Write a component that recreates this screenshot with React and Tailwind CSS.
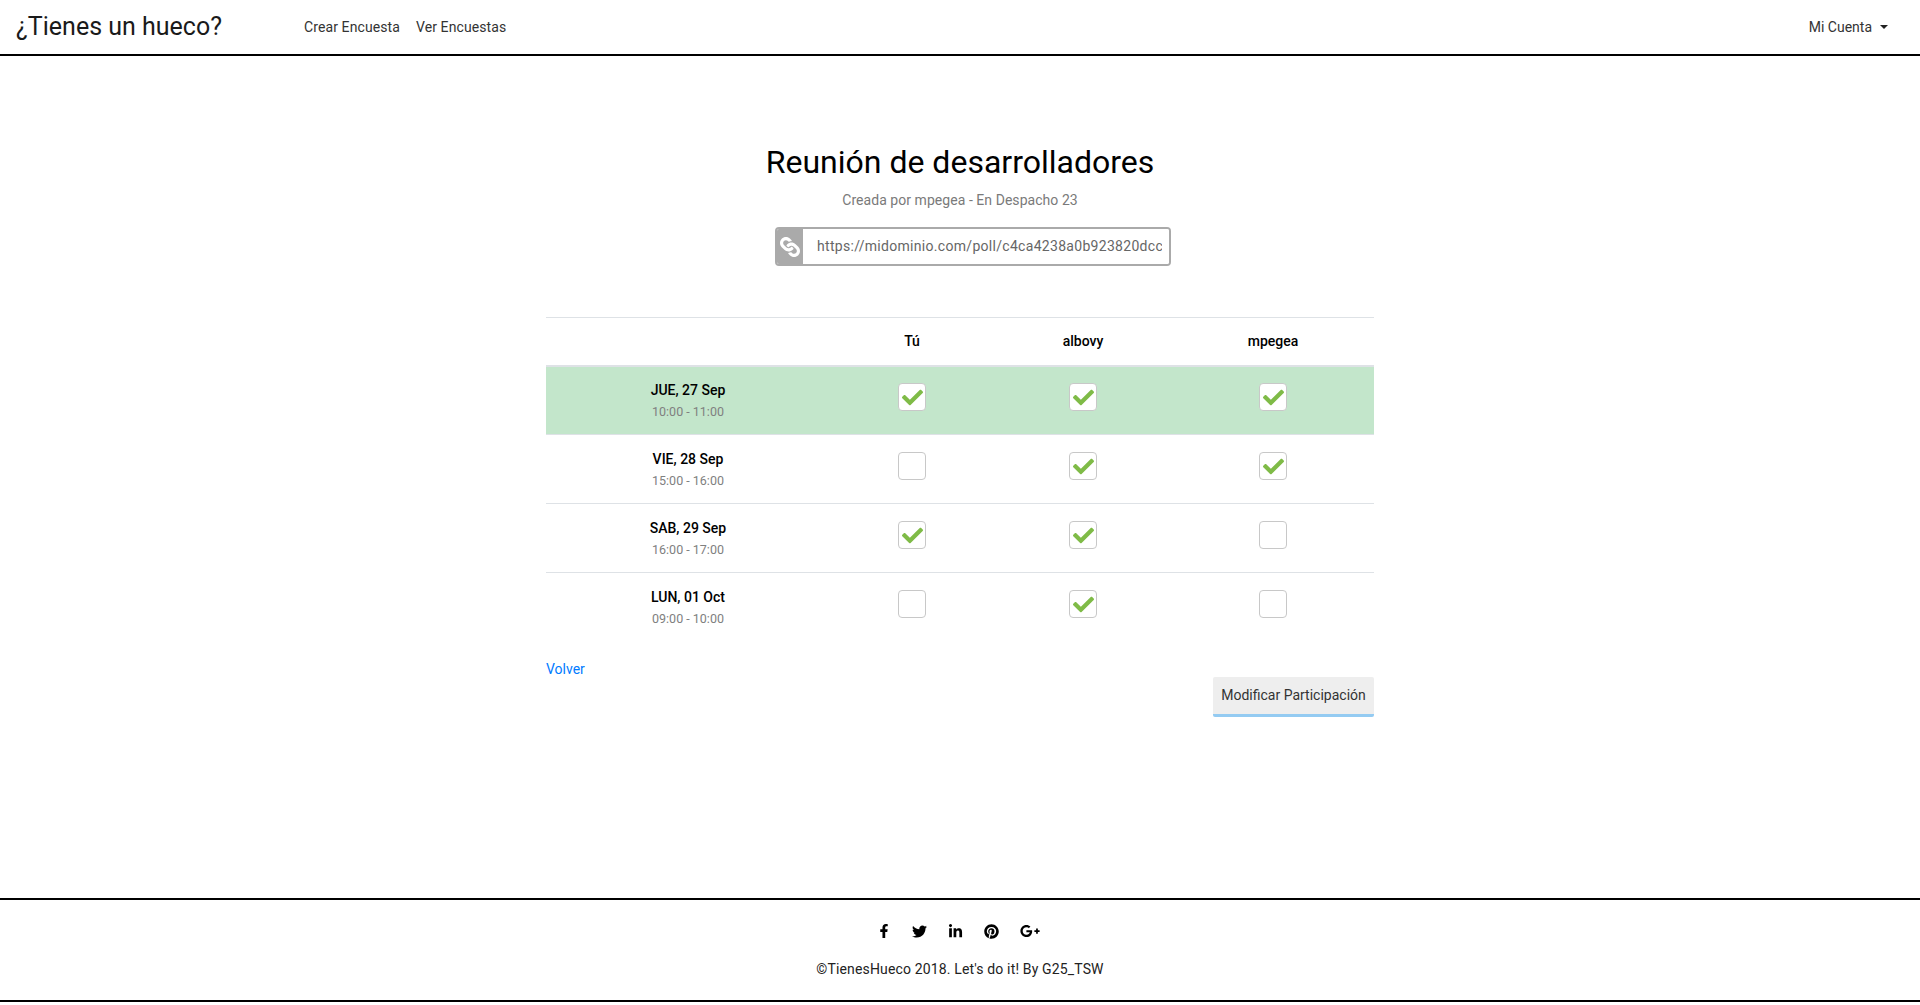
import { FaCheck, FaLink, FaFacebookF, FaTwitter, FaLinkedinIn, FaPinterest, FaGooglePlusG } from "react-icons/fa";

const rows = [
  { day: "JUE, 27 Sep", time: "10:00 - 11:00", checks: [true, true, true], best: true },
  { day: "VIE, 28 Sep", time: "15:00 - 16:00", checks: [false, true, true] },
  { day: "SAB, 29 Sep", time: "16:00 - 17:00", checks: [true, true, false] },
  { day: "LUN, 01 Oct", time: "09:00 - 10:00", checks: [false, true, false] },
];

const Check = ({ on }) => (
  <span className="mx-auto flex h-[28px] w-[28px] -translate-y-[3px] items-center justify-center rounded-[4px] border border-[#c8c8c8] bg-white">
    {on && <FaCheck className="h-[21px] w-[21px] text-[#7fbb47]" />}
  </span>
);

const App = () => {
  return (
    <div className="flex min-h-[1005px] flex-col bg-white font-['Roboto',sans-serif] text-[#212529]">
      <nav className="flex h-[56px] items-center justify-between border-b-2 border-black pl-[16px] pr-[32px]">
        <div className="flex items-center">
          <a className="w-[288px] text-[25px] leading-[56px] text-[#1a1a1a]">¿Tienes un hueco?</a>
          <a className="mr-[16px] text-[14px] tracking-[0.1px] text-[#333]">Crear Encuesta</a>
          <a className="text-[14px] tracking-[0.1px] text-[#333]">Ver Encuestas</a>
        </div>
        <div className="flex items-center gap-[8px] text-[14px] text-[#333]">
          Mi Cuenta
          <span className="h-0 w-0 border-x-[4px] border-t-[4px] border-x-transparent border-t-[#222]" />
        </div>
      </nav>

      <main className="flex h-[842px] flex-col items-center pt-[82px]">
        <h1 className="text-[32px] leading-[48px] text-black">Reunión de desarrolladores</h1>
        <p className="mt-[2px] text-[14px] leading-[24px] tracking-[0.05px] text-[#7a7a7a]">Creada por mpegea - En Despacho 23</p>
        <div className="ml-[26px] mt-[15px] flex h-[39px] w-[396px] overflow-hidden rounded-[4px] border-2 border-[#aaa]">
          <span className="flex w-[26px] items-center justify-center bg-[#aaa]">
            <FaLink className="h-[20px] w-[20px] rotate-90 text-white" />
          </span>
          <input
            readOnly
            value="https://midominio.com/poll/c4ca4238a0b923820dcc509a6f75849b"
            className="min-w-0 flex-1 bg-white pl-[14px] pr-[7px] text-[14px] tracking-[0.3px] text-[#666] outline-none"
          />
        </div>

        <div className="mt-[51px] w-[828px]">
          <table className="w-full table-fixed border-collapse">
            <colgroup>
              <col className="w-[284px]" />
              <col className="w-[164px]" />
              <col className="w-[178px]" />
              <col className="w-[202px]" />
            </colgroup>
            <thead>
              <tr className="h-[48px] border-y border-y-[#dee2e6] border-b-2 text-[14px] font-medium text-black">
                <th className="font-medium" />
                <th className="font-medium">Tú</th>
                <th className="font-medium">albovy</th>
                <th className="font-medium">mpegea</th>
              </tr>
            </thead>
            <tbody>
              {rows.map((row) => (
                <tr key={row.day} className={`h-[69px] border-t border-[#dee2e6] ${row.best ? "bg-[#c3e6cb]" : ""}`}>
                  <td className="text-center">
                    <div className="text-[14px] font-medium leading-[24px] text-black">{row.day}</div>
                    <div className="text-[12.5px] leading-[20px] text-[#808080]">{row.time}</div>
                  </td>
                  {row.checks.map((on, i) => (
                    <td key={i}>
                      <Check on={on} />
                    </td>
                  ))}
                </tr>
              ))}
            </tbody>
          </table>
          <a className="mt-[15px] block text-[14px] leading-[24px] text-[#007bff]">Volver</a>
          <div className="-mt-[4px] flex justify-end">
            <button className="h-[40px] w-[161px] rounded-[2px] border-b-[3px] border-[#94cbf2] bg-[#eeeeee] text-[14px] text-[#333]">
              Modificar Participación
            </button>
          </div>
        </div>
      </main>

      <footer className="h-[104px] border-y-2 border-black">
        <div className="ml-[-3px] mt-[21px] flex items-center justify-center gap-[21px] text-black">
          <FaFacebookF className="h-[14px] w-[14px]" />
          <FaTwitter className="h-[15px] w-[15px]" />
          <FaLinkedinIn className="h-[15px] w-[15px]" />
          <FaPinterest className="h-[15px] w-[15px]" />
          <FaGooglePlusG className="h-[20px] w-[20px]" />
        </div>
        <p className="mt-[16px] text-center text-[14px] leading-[24px] tracking-[0.15px] text-[#222]">©TienesHueco 2018. Let's do it! By G25_TSW</p>
      </footer>
    </div>
  );
};

export default App;
